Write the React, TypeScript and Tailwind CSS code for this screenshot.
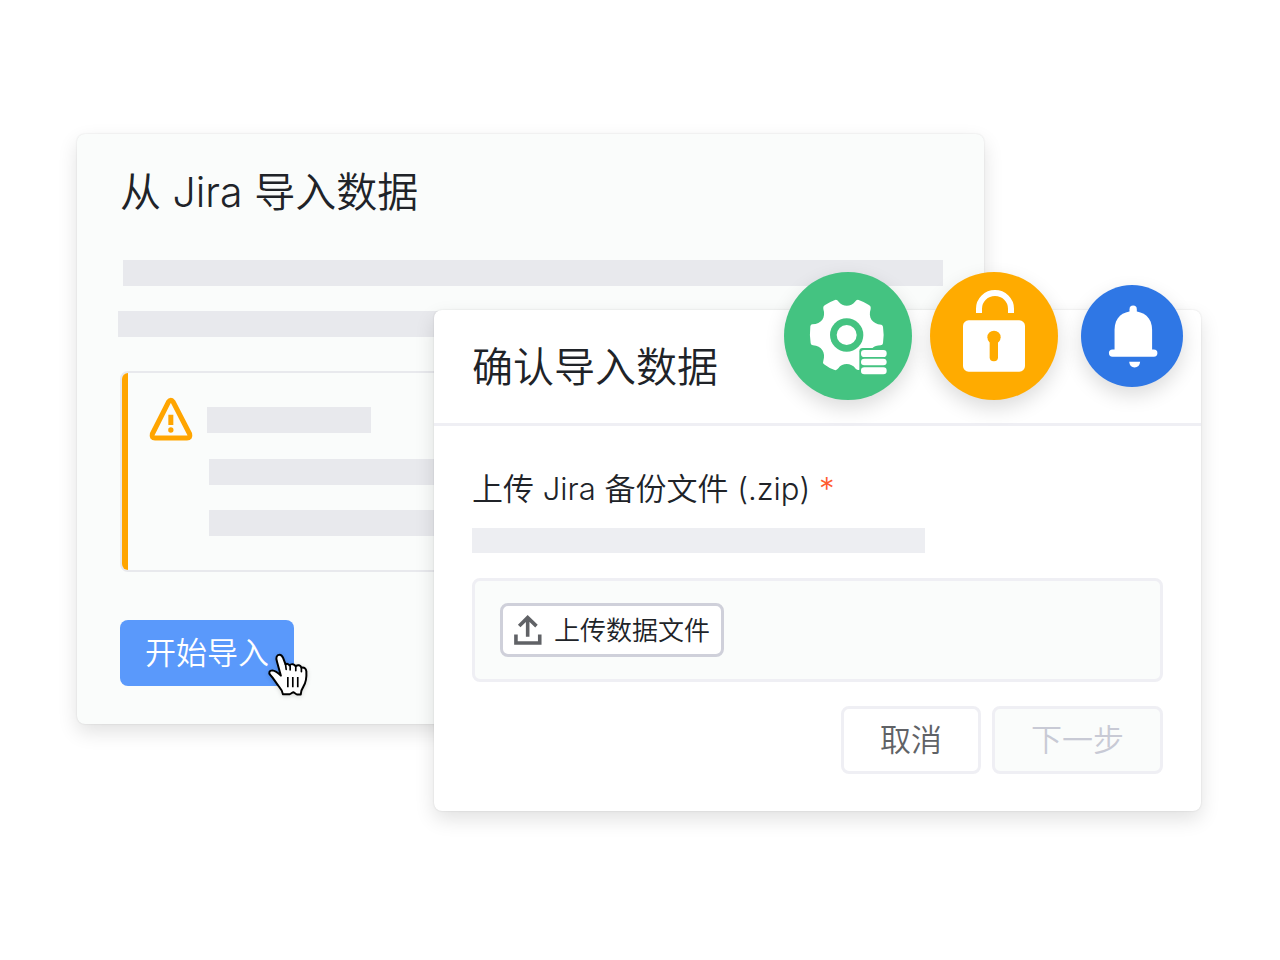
import type { ReactNode } from 'react';

function WarningIcon() {
  return (
    <svg viewBox="118 112 132 132" className="h-11 w-11 shrink-0" aria-hidden="true">
      <path
        d="M177 126Q183 117 190 126L240 223Q243 235 232 235H136Q125 235 128 223Z"
        fill="none"
        stroke="#ffa500"
        strokeWidth="15"
        strokeLinejoin="round"
      />
      <path d="M176 165h15v31h-15z" fill="#ffa500" />
      <circle cx="183.500" cy="211" r="8" fill="#ffa500" />
    </svg>
  );
}

function UploadIcon() {
  return (
    <svg
      viewBox="69 60 84 92"
      className="h-[30px] w-7 shrink-0"
      fill="none"
      stroke="#606266"
      strokeWidth="11"
      aria-hidden="true"
    >
      <path d="M74 120V146H147V120" />
      <path d="M110 127V70M84 94L110 68L137 94" />
    </svg>
  );
}

function HandCursor() {
  return (
    <svg
      viewBox="470 122 130 138"
      className="pointer-events-none absolute -right-4 -bottom-3 h-[46px] w-[43px] drop-shadow-sm"
      aria-hidden="true"
    >
      <path
        d="M508 130C499 130 496 139 500 150L512 193C503 184 496 178 486 177C477 177 474 184 480 191C489 200 496 213 504 223C511 231 516 236 518 249H539C544 247 547 243 550 243C554 244 555 249 561 250H572C572 239 574 235 580 226C587 215 590 197 589 180C588 171 583 167 574 169C571 161 563 159 557 165C552 157 543 156 538 162C535 157 530 156 526 159L519 140C516 133 513 130 508 130Z"
        fill="#fff"
        stroke="#000"
        strokeWidth="6"
        strokeLinejoin="round"
      />
      <path
        d="M526 159L528 174M540 163V176M557 166V178M574 169V181"
        stroke="#000"
        strokeWidth="5"
        strokeLinecap="round"
      />
      <path d="M533 197V228M548 197V228M563 197V228" stroke="#000" strokeWidth="5" />
    </svg>
  );
}

function GearIcon() {
  return (
    <svg viewBox="42 36 384 384" className="h-full w-full" aria-hidden="true">
      <path
        d="M127 193C155 192 168 172 160 147Q158 140 164 136Q178 126 195 120Q201 118 206 125C218 141 243 141 255 125Q260 118 266 120Q284 126 298 136Q304 140 302 147C294 172 306 192 334 194Q338 195 339 200Q343 225 339 250Q338 256 332 256C310 257 300 267 299 285L268 330Q262 331 257 326C244 308 217 308 205 325Q200 332 194 330Q176 324 162 313Q157 309 160 302C168 278 155 258 129 256Q123 256 122 250Q118 225 121 199Q122 193 127 193Z"
        fill="#fff"
      />
      <circle cx="230" cy="225" r="50" fill="#44c381" />
      <circle cx="230" cy="225" r="30" fill="#fff" />
      <path d="M268 350V274Q268 264 278 264H352V350Z" fill="#44c381" />
      <rect x="273" y="270" width="77" height="21" rx="10" fill="#fff" />
      <rect x="273" y="296" width="77" height="20" rx="10" fill="#fff" />
      <rect x="273" y="322" width="77" height="21" rx="10" fill="#fff" />
    </svg>
  );
}

function LockIcon() {
  return (
    <svg viewBox="30 36 384 384" className="h-full w-full" aria-hidden="true">
      <path
        d="M177 159V146A48 47 0 0 1 273 146V159"
        fill="none"
        stroke="#fff"
        strokeWidth="18"
      />
      <rect x="129" y="181" width="186" height="154" rx="17" fill="#fff" />
      <circle cx="222" cy="232" r="20" fill="#ffab00" />
      <rect x="209" y="232" width="25" height="72" rx="12" fill="#ffab00" />
    </svg>
  );
}

function BellIcon() {
  return (
    <svg viewBox="32 43 307 307" className="h-full w-full" fill="#fff" aria-hidden="true">
      <rect x="178" y="105" width="22" height="40" rx="11" />
      <path d="M133 245V178C133 140 158 122 189 122C220 122 246 140 246 178V245Z" />
      <rect x="116" y="237" width="146" height="22" rx="11" />
      <path d="M177 274H210C209 285 203 291 193 291C184 291 178 285 177 274Z" />
    </svg>
  );
}

function Dialog({ children }: { children: ReactNode }) {
  return (
    <section
      role="dialog"
      aria-labelledby="confirm-title"
      className="relative col-start-2 col-span-2 row-start-1 mt-[176px] rounded-lg bg-white shadow-[0_8px_20px_rgba(0,0,0,0.12),0_0_2px_rgba(0,0,0,0.12)]"
    >
      {children}
    </section>
  );
}

export default function App() {
  return (
    <main className="min-h-screen bg-white py-[134px] pr-[79px] pl-[77px] font-['Inter','Noto_Sans_CJK_SC',sans-serif] font-[350] text-[#202328]">
      <div className="mx-auto grid max-w-[1124px] grid-cols-[357fr_550fr_217fr] items-start">
        <section className="col-start-1 col-span-2 row-start-1 rounded-lg bg-[#fafcfb] px-[41px] pt-[33px] pb-[38px] shadow-[0_8px_20px_rgba(0,0,0,0.12),0_0_2px_rgba(0,0,0,0.12)]">
          <h1 className="pl-0.5 text-[41px] leading-[50px]">从 Jira 导入数据</h1>

          <div className="mt-[43px] flex flex-col gap-[25px]">
            <div className="ml-[5px] h-[26px] bg-[#e8e9ed]" />
            <div className="h-[26px] bg-[#e8e9ed]" />
          </div>

          <div className="mx-0.5 mt-[34px] flex h-[201px] overflow-hidden rounded-lg border-2 border-[#e8e9ed]">
            <div className="w-[6px] shrink-0 bg-[#ffa500]" />
            <div className="flex grow pt-6 pl-[21px]">
              <WarningIcon />
              <div className="ml-[14px] grow pt-[10px]">
                <div className="h-[26px] w-[164px] bg-[#e8e9ed]" />
                <div className="mt-[26px] ml-0.5 flex flex-col gap-[25px]">
                  <div className="h-[26px] bg-[#e8e9ed]" />
                  <div className="h-[26px] bg-[#e8e9ed]" />
                </div>
              </div>
            </div>
          </div>

          <div className="relative mt-12 ml-0.5 w-fit">
            <button
              type="button"
              className="block h-[66px] rounded-lg bg-[#5a99fb] px-[25px] text-[31px] text-white"
            >
              开始导入
            </button>
            <HandCursor />
          </div>
        </section>

        <Dialog>
          <header className="flex h-[116px] items-center border-b-3 border-[#efeff4] px-[38px]">
            <h2 id="confirm-title" className="text-[41px] leading-[50px]">
              确认导入数据
            </h2>
          </header>

          <div className="absolute -top-[38px] right-[18px] flex items-center gap-[23px]">
            <div className="flex gap-[18px]">
              <span className="size-32 rounded-full bg-[#44c381] shadow-[0_8px_20px_rgba(0,0,0,0.14)]">
                <GearIcon />
              </span>
              <span className="size-32 rounded-full bg-[#ffab00] shadow-[0_8px_20px_rgba(0,0,0,0.14)]">
                <LockIcon />
              </span>
            </div>
            <span className="size-[102px] rounded-full bg-[#2f77e5] shadow-[0_8px_20px_rgba(0,0,0,0.14)]">
              <BellIcon />
            </span>
          </div>

          <div className="px-[38px] pt-[43px] pb-[37px]">
            <label htmlFor="backup-file" className="block text-[31px] leading-10">
              上传 Jira 备份文件 (.zip) <span className="text-[#ff5b2e]">*</span>
            </label>
            <div className="mt-[19px] h-[25px] w-[453px] bg-[#edeef2]" />

            <div className="mt-[25px] flex h-[104px] items-center rounded-lg border-3 border-[#efeff4] bg-[#fafcfb] px-[25px]">
              <button
                type="button"
                id="backup-file"
                className="flex h-[54px] items-center gap-3 rounded-lg border-3 border-[#cfd0da] bg-white px-[11px] text-[26px]"
              >
                <UploadIcon />
                上传数据文件
              </button>
            </div>

            <div className="mt-6 flex justify-end gap-[11px]">
              <button
                type="button"
                className="h-[68px] rounded-lg border-3 border-[#efeff4] bg-white px-9 text-[31px] text-[#606266]"
              >
                取消
              </button>
              <button
                type="button"
                disabled
                className="h-[68px] rounded-lg border-3 border-[#efeff4] bg-[#fafcfb] px-9 text-[31px] text-[#c8cad5]"
              >
                下一步
              </button>
            </div>
          </div>
        </Dialog>
      </div>
    </main>
  );
}
